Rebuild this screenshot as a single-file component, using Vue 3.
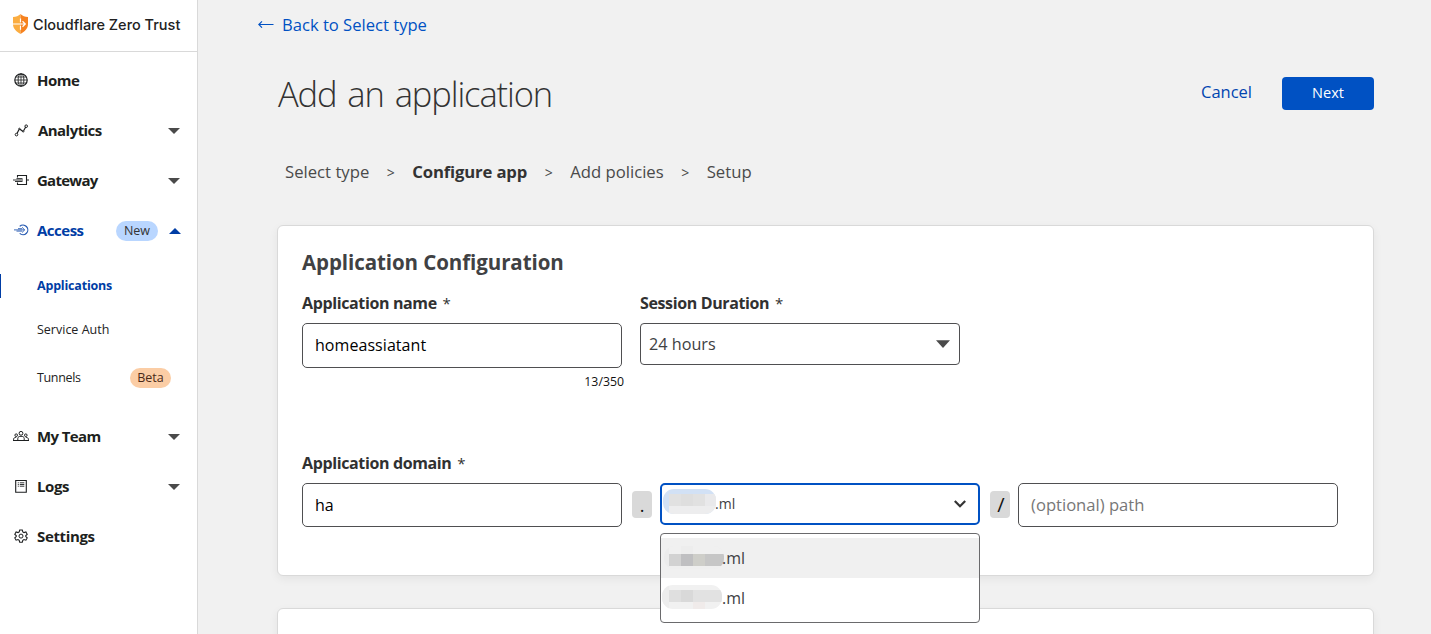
<script setup>
import { ref } from 'vue'

const nav = [
  { id: 'home', label: 'Home' },
  { id: 'analytics', label: 'Analytics', expandable: true },
  { id: 'gateway', label: 'Gateway', expandable: true },
  {
    id: 'access',
    label: 'Access',
    expandable: true,
    open: true,
    badge: 'New',
    children: [
      { id: 'applications', label: 'Applications', active: true },
      { id: 'service', label: 'Service Auth' },
      { id: 'tunnels', label: 'Tunnels', badge: 'Beta' },
    ],
  },
  { id: 'team', label: 'My Team', expandable: true },
  { id: 'logs', label: 'Logs', expandable: true },
  { id: 'settings', label: 'Settings' },
]
const appName = ref('homeassiatant')
const subdomain = ref('ha')
</script>

<template>
  <div class="page">
    <aside class="sidebar">
      <header class="brand">
        <svg class="shield" width="15" height="20" viewBox="0 0 15 20">
          <path d="M7.5 0C5.5 2 3 2.9 0 3v7c0 4.800 3.200 7.500 7.500 10z" fill="#fbad41" />
          <path d="M7.500 0C9.500 2 12 2.900 15 3v7c0 4.800-3.200 7.500-7.500 10z" fill="#f6821f" />
          <path d="M0 10h12M9.500 7.300L12.300 10 9.500 12.700M7.500 4.500v3.700M7.500 11.800v4" fill="none" stroke="#fff" stroke-width="1.200" />
        </svg>
        <span class="brand-name">Cloudflare Zero Trust</span>
      </header>
      <nav>
        <template v-for="item in nav" :key="item.id">
          <a class="item" :class="[item.id, { open: item.open }]">
            <svg class="icon" width="16" height="16" viewBox="0 0 16 16" fill="none" stroke="currentColor" stroke-width="1">
              <template v-if="item.id === 'home'">
                <circle cx="8" cy="8" r="6.200" stroke-width="1.200" />
                <ellipse cx="8" cy="8" rx="2.900" ry="6.200" stroke-width=".9" />
                <path d="M8 2v12M2 8h12M2.800 5h10.400M2.800 11h10.400" stroke-width=".8" />
              </template>
              <template v-else-if="item.id === 'analytics'">
                <path d="M4 11.600L6 7.600M7 7.200L9.700 9.200M10.600 8.800L12.700 5" stroke-width="1.200" />
                <circle cx="3.500" cy="12.600" r="1.300" />
                <circle cx="6.400" cy="6.900" r=".7" />
                <circle cx="10.200" cy="9.400" r=".7" />
                <circle cx="13.200" cy="4.200" r="1.300" />
              </template>
              <template v-else-if="item.id === 'gateway'">
                <path d="M4.500 5.500v-2h9v9h-9v-2M13.500 8H16" stroke-width="1.100" />
                <path d="M0 8h10M2 9.500h7.500M3.500 6.600h6" stroke-width=".9" />
              </template>
              <template v-else-if="item.id === 'access'">
                <path d="M6.700 4.400A4.800 4.800 0 1 1 6.700 11.400" stroke-width="1.200" />
                <path d="M1 7.900h10.500M9 5.300L11.700 7.900 9 10.500M3.500 9.100h5.500M5 6.700h4" stroke-width=".9" />
              </template>
              <template v-else-if="item.id === 'team'">
                <circle cx="8" cy="5.300" r="1.900" />
                <path d="M4.800 12.500v-2.200c0-1.300 1.300-2 3.200-2s3.200.7 3.200 2v2.200" />
                <circle cx="3.200" cy="7.200" r="1.300" />
                <circle cx="12.800" cy="7.200" r="1.300" />
                <path d="M.6 12.500v-1.300c0-1.200 1.100-1.800 2.600-1.800M15.400 12.500v-1.300c0-1.200-1.100-1.800-2.600-1.800M0 12.500h16" />
              </template>
              <template v-else-if="item.id === 'logs'">
                <path d="M2.700 2.500h10.600v11.800H2.700z" stroke-width="1.100" />
                <path d="M4.800 4.800h1M6.800 4.800h4.500M4.800 6.500h1M6.800 6.500h4.500M4.800 8.200h1M6.800 8.200h4.500" stroke-width=".9" />
              </template>
              <template v-else>
                <path d="M6.700 2h2.600l.5 1.900 1.200.7 1.900-.6 1.300 2.300-1.400 1.300v1l1.400 1.300-1.300 2.300-1.900-.6-1.200.7-.5 1.900H6.700l-.5-1.900-1.200-.7-1.900.6-1.300-2.300 1.400-1.300v-1L1.800 6.300 3.100 4l1.900.6 1.200-.7z" stroke-width="1.100" />
                <circle cx="8" cy="8.100" r="2" />
              </template>
            </svg>
            <span class="label">{{ item.label }}</span>
            <span v-if="item.badge" class="badge new">{{ item.badge }}</span>
            <svg v-if="item.expandable" class="caret" width="12" height="6" viewBox="0 0 12 6">
              <path :d="item.open ? 'M0 6L6 0l6 6z' : 'M0 0h12L6 6z'" fill="currentColor" />
            </svg>
          </a>
          <div v-if="item.children" class="sub">
            <a v-for="c in item.children" :key="c.id" class="sub-item" :class="[c.id, { active: c.active }]">
              <span>{{ c.label }}</span>
              <span v-if="c.badge" class="badge beta">{{ c.badge }}</span>
            </a>
          </div>
        </template>
      </nav>
    </aside>

    <main class="main">
      <a class="back">
        <svg width="16" height="8" viewBox="0 0 16 8" fill="none" stroke="currentColor">
          <path d="M.8 4.500H15.500M4 1.300L.8 4.500 4 7.700" stroke-width="1.100" />
        </svg>
        <span>Back to Select type</span>
      </a>
      <div class="heading">
        <h1>Add an application</h1>
        <a class="cancel">Cancel</a>
        <button class="next">Next</button>
      </div>
      <div class="steps">
        <span>Select type</span><i>&gt;</i>
        <b>Configure app</b><i>&gt;</i>
        <span>Add policies</span><i>&gt;</i>
        <span>Setup</span>
      </div>

      <section class="card">
        <h2>Application Configuration</h2>
        <div class="row">
          <div class="field">
            <label>Application name <em>*</em></label>
            <input v-model="appName" class="name-input" />
            <span class="count">13/350</span>
          </div>
          <div class="field">
            <label>Session Duration <em>*</em></label>
            <div class="select">
              <span>24 hours</span>
              <svg width="14" height="8" viewBox="0 0 14 8"><path d="M0 .3h14L7 8z" fill="#4a4a4a" /></svg>
            </div>
          </div>
        </div>
        <label>Application domain <em>*</em></label>
        <div class="domain">
          <input v-model="subdomain" />
          <span class="sep">.</span>
          <div class="combo">
            <svg class="redacted" width="53" height="25" viewBox="0 0 53 25">
              <defs><clipPath id="pill-a"><rect width="53" height="25" rx="11" /></clipPath></defs>
              <g clip-path="url(#pill-a)">
                <rect width="53" height="25" fill="#d2e1f5" />
                <rect x="6" y="5" width="47" height="20" fill="#ededee" />
                <rect x="6" y="5" width="36" height="12" fill="#e1e1e1" />
                <rect x="18" y="5" width="12" height="12" fill="#dedede" />
                <rect x="42" y="5" width="11" height="12" fill="#e9e9eb" />
              </g>
            </svg>
            <span class="tld">.ml</span>
            <svg class="chev" width="12" height="8" viewBox="0 0 12 8" fill="none" stroke="#333" stroke-width="2.200">
              <path d="M.8 1L6 6.200 11.200 1" />
            </svg>
            <div class="menu">
              <div class="option hover">
                <svg class="redacted" width="60" height="25" viewBox="0 0 60 25">
                  <defs><clipPath id="pill-b"><rect y="1" width="60" height="23" rx="10" /></clipPath></defs>
                  <g clip-path="url(#pill-b)">
                    <rect width="60" height="25" fill="#ececec" />
                    <rect x="5" width="55" height="9" fill="#f0f0f0" />
                    <rect x="17" width="12" height="9" fill="#ededed" />
                    <rect x="5" y="21" width="55" height="4" fill="#efefef" />
                    <rect x="5" y="9" width="12" height="12" fill="#d2d2d2" />
                    <rect x="17" y="9" width="12" height="12" fill="#bfbfc1" />
                    <rect x="29" y="9" width="12" height="12" fill="#cecec9" />
                    <rect x="41" y="9" width="19" height="12" fill="#c6c6c6" />
                  </g>
                </svg>
                <span>.ml</span>
              </div>
              <div class="option">
                <svg class="redacted" width="60" height="25" viewBox="0 0 60 25">
                  <defs><clipPath id="pill-c"><rect width="60" height="24" rx="11" /></clipPath></defs>
                  <g clip-path="url(#pill-c)">
                    <rect width="60" height="25" fill="#f1f1f1" />
                    <rect width="7" height="25" fill="#ededed" />
                    <rect x="7" y="5" width="53" height="12" fill="#e2e2e2" />
                    <rect x="7" y="5" width="12" height="12" fill="#dfdfdf" />
                    <rect x="19" y="5" width="12" height="12" fill="#d9d9d9" />
                    <rect x="31" y="17" width="12" height="8" fill="#f0ebea" />
                  </g>
                </svg>
                <span>.ml</span>
              </div>
            </div>
          </div>
          <span class="sep slash">/</span>
          <input class="path" placeholder="(optional) path" />
        </div>
      </section>
      <section class="card following"></section>
    </main>
  </div>
</template>

<style>
body { margin: 0; background: #f1f1f1; overflow: hidden; }
</style>

<style scoped>
* { box-sizing: border-box; }
.page { display: flex; width: 1431px; height: 634px; overflow: hidden; font-family: "Open Sans", "Noto Sans", sans-serif; background: #f1f1f1; color: #333; }
.page svg { flex: none; display: block; }
.sidebar { width: 198px; flex: none; background: #fff; border-right: 1px solid #d9d9d9; }
.brand { height: 52px; border-bottom: 1px solid #d9d9d9; display: flex; align-items: center; padding: 0 0 3px 13px; gap: 5px; }
.brand-name { padding-top: 1px; font: 550 14.5px/20px Inter, sans-serif; color: #222; white-space: nowrap; letter-spacing: 0; }
nav { padding-top: 3px; }
.item { display: flex; align-items: center; height: 50px; padding: 0 17px 0 13px; font-size: 15px; font-weight: 700; color: #1d1f20; }
.item.open { padding-right: 16px; }
.icon { margin-right: 8px; }
.label { white-space: nowrap; letter-spacing: -.4px; }
.analytics .label { margin-left: 1px; letter-spacing: -.55px; }
.gateway .label { letter-spacing: -.75px; }
.team .label { letter-spacing: -.6px; }
.access .label { letter-spacing: -.5px; }
.home .label { letter-spacing: -.5px; }
.settings .label { letter-spacing: -.35px; }
.caret { margin: 1px 0 0 auto; color: #4a4a4a; }
.open, .open .caret { color: #003da5; }
.open .icon { opacity: .85; }
.badge { display: flex; align-items: center; justify-content: center; height: 20px; border-radius: 10px; font-size: 12.5px; font-weight: 400; color: #333; }
.new { width: 42px; margin: 1px 0 0 auto; padding-bottom: 1px; background: #b9d6ff; }
.new + .caret { margin-left: 11px; }
.beta { width: 41px; background: #fbcda5; margin-right: 26px; color: #4a2a18; }
.sub { padding: 6px 0; font-size: 12.5px; color: #222; }
.sub-item { display: flex; align-items: center; justify-content: space-between; height: 48px; padding-left: 37px; }
.service { height: 41px; }
.tunnels { height: 55px; letter-spacing: -.35px; }
.tunnels .badge { letter-spacing: 0; }
.sub-item.active { height: 24px; margin: 13px 0 11px; padding: 0 0 2px 36px; border-left: 1px solid #003da5; color: #003da5; font-weight: 700; letter-spacing: -.2px; }
.main { flex: 1; padding-left: 79px; }
.back { display: flex; align-items: center; gap: 8px; height: 50px; margin-left: -19px; padding-bottom: 2px; color: #0051c3; font-size: 16.600px; }
.heading { display: flex; align-items: center; height: 88px; width: 1097px; padding-bottom: 2px; }
h1 { margin: 1px auto 0 1px; font-size: 34.500px; line-height: 48px; font-weight: 300; letter-spacing: -1.100px; word-spacing: 3px; color: #333; }
.cancel { color: #0045b0; font-size: 16.500px; margin-right: 30px; padding-bottom: 3px; }
.next { width: 92px; height: 33px; border: 0; border-radius: 4px; background: #0051c3; color: #fff; font: 14.500px "Open Sans", sans-serif; padding: 0 0 2px; }
.steps { display: flex; align-items: center; height: 68px; margin-left: 8px; padding-bottom: 2px; font-size: 16.700px; color: #4a4a4a; white-space: nowrap; }
.steps i { font-style: normal; font-size: 14px; width: 43px; text-align: center; padding-top: 2px; }
.steps b { color: #333; letter-spacing: -.15px; }
.card { width: 1097px; height: 351px; margin-top: 19px; padding: 0 24px; background: #fff; border: 1px solid #d9d9d9; border-radius: 6px; box-shadow: 0 3px 10px rgba(0,0,0,.06); }
.following { margin-top: 32px; }
h2 { margin: 20px 0 13px; font-size: 20.500px; line-height: 32px; color: #404143; letter-spacing: -.08px; }
.row { display: flex; gap: 18px; height: 160px; }
.field { width: 320px; display: flex; flex-direction: column; }
label { display: block; height: 32px; line-height: 24px; font-size: 16px; font-weight: 700; color: #313131; letter-spacing: -.370px; white-space: nowrap; }
label em { font-style: normal; font-weight: 400; font-size: 15px; margin-left: 2px; }
input { width: 320px; height: 44px; border: 1px solid #4f4f51; border-radius: 5px; background: #fff; padding: 0 12px; font: 16px "Open Sans", sans-serif; color: #000; outline: 0; }
input::placeholder { color: #777; opacity: 1; }
.name-input { height: 45px; padding-bottom: 2px; letter-spacing: .06px; }
.path { font-size: 16.600px; padding-bottom: 2px; }
.count { font-size: 12.300px; color: #111; align-self: flex-end; line-height: 16px; margin: 6px -2px 0 0; }
.select { height: 42px; border: 1px solid #4f4f51; border-radius: 4px; display: flex; align-items: center; justify-content: space-between; padding: 0 9px 0 8px; font-size: 16.200px; color: #404143; }
.domain { display: flex; align-items: flex-start; }
.sep { width: 20px; height: 27px; margin: 8px 8px 0 10px; background: #d9d9d9; border-radius: 4px; text-align: center; font-size: 18px; line-height: 28px; color: #111; }
.slash { padding-left: 2px; font-size: 20px; }
.combo { position: relative; width: 320px; height: 42px; border: 2px solid #0051c3; border-radius: 5px; padding: 0 12px 0 1px; display: flex; align-items: center; }
.combo > .redacted { margin-top: -5px; }
.tld { font-size: 14px; color: #404143; margin: -2px 0 0 -1px; }
.chev { margin-left: auto; }
.menu { position: absolute; left: -2px; top: 48px; width: 320px; height: 90px; background: #fff; border: 1px solid #6a6a6c; border-radius: 4px; padding-top: 4px; }
.option { display: flex; align-items: center; height: 40px; padding-left: 1px; font-size: 16px; color: #404143; }
.option .redacted { margin-top: -2px; }
.option.hover { background: #f0f0f0; padding-left: 3px; }
.hover .redacted { margin: -1px -2px 0 0; }
</style>
